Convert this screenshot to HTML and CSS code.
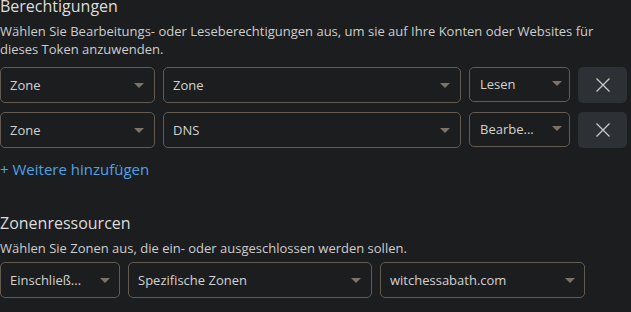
FILE: index.html
```html
<!DOCTYPE html>
<html lang="de">
<head>
  <meta charset="UTF-8" />
  <title>API-Token erstellen</title>
  <link rel="stylesheet" href="styles.css">
</head>
<body>
  <div class="panel">
    <section class="block">
      <h2>Berechtigungen</h2>
      <p class="hint">Wählen Sie Bearbeitungs- oder Leseberechtigungen aus, um sie auf Ihre Konten oder Websites für dieses Token anzuwenden.</p>

      <div class="row">
        <div class="select w-scope">Zone<span class="caret"></span></div>
        <div class="select w-item">Zone<span class="caret"></span></div>
        <div class="select w-level short">Lesen<span class="caret"></span></div>
        <button class="remove" title="Entfernen">
          <svg width="16" height="16" viewBox="0 0 16 16"><path d="M1.5 1.5 L14.5 14.5 M14.5 1.5 L1.5 14.5" stroke="#c9c9c9" stroke-width="1.3" fill="none"/></svg>
        </button>
      </div>

      <div class="row">
        <div class="select w-scope">Zone<span class="caret"></span></div>
        <div class="select w-item">DNS<span class="caret"></span></div>
        <div class="select w-level short">Bearbe...<span class="caret"></span></div>
        <button class="remove" title="Entfernen">
          <svg width="16" height="16" viewBox="0 0 16 16"><path d="M1.5 1.5 L14.5 14.5 M14.5 1.5 L1.5 14.5" stroke="#c9c9c9" stroke-width="1.3" fill="none"/></svg>
        </button>
      </div>

      <a class="add-link" href="#">+ Weitere hinzufügen</a>
    </section>

    <section class="block second">
      <h2>Zonenressourcen</h2>
      <p class="hint">Wählen Sie Zonen aus, die ein- oder ausgeschlossen werden sollen.</p>

      <div class="row">
        <div class="select w-mode">Einschließ...<span class="caret"></span></div>
        <div class="select w-kind">Spezifische Zonen<span class="caret"></span></div>
        <div class="select w-zone">witchessabath.com<span class="caret"></span></div>
      </div>
    </section>

    <section class="block third">
      <h2 class="next">Client-IP-Adressfilterung</h2>
    </section>
  </div>
</body>
</html>
```

FILE: styles.css
```css
html, body {
  margin: 0;
  background: #1c1d1f;
  overflow: hidden;
}
body {
  font-family: 'Open Sans', 'Noto Sans', sans-serif;
  color: #cfcfcf;
}
.panel {
  margin-top: -5px;
}
h2 {
  margin: 0;
  font-size: 16px;
  font-weight: 400;
  line-height: 22px;
  color: #dcdcdc;
}
.hint {
  margin: 5px 0 0;
  font-size: 13px;
  line-height: 18px;
  color: #cdcdcd;
}
.row {
  display: flex;
  gap: 8px;
  margin-top: 9px;
}
.row + .row {
  margin-top: 9px;
}
.select {
  position: relative;
  box-sizing: border-box;
  height: 36px;
  padding: 0 28px 0 9px;
  border: 1px solid #635b51;
  border-radius: 5px;
  font-size: 13px;
  line-height: 34px;
  color: #d2d2d2;
  white-space: nowrap;
  overflow: hidden;
}
.select.short {
  height: 35px;
  line-height: 32px;
  padding-left: 10px;
}
.caret {
  position: absolute;
  right: 10px;
  top: 15px;
  width: 0;
  height: 0;
  border-left: 5px solid transparent;
  border-right: 5px solid transparent;
  border-top: 5px solid #7b7367;
}
.short .caret {
  top: 13px;
  right: 7px;
}
.w-scope { width: 155px; }
.w-item { width: 298px; }
.w-level { width: 101px; }
.w-mode { width: 120px; }
.w-kind { width: 244px; }
.w-zone { width: 205px; }
.w-mode .caret { right: 9px; }
.remove {
  width: 49px;
  height: 36px;
  border: none;
  border-radius: 5px;
  background: #2d3034;
  display: flex;
  align-items: center;
  justify-content: center;
  padding: 0;
  cursor: pointer;
}
.add-link {
  display: inline-block;
  margin-top: 9px;
  font-size: 15px;
  line-height: 24px;
  color: #4ea1e6;
  text-decoration: none;
}
.second {
  margin-top: 31px;
}
.second .hint {
  margin-top: 5px;
}
.second .row {
  margin-top: 5px;
}
.w-zone .caret { right: 9px; }
.third {
  margin-top: 16px;
}
.next {
  color: #4ea1e6;
  padding-left: 34px;
}
```
